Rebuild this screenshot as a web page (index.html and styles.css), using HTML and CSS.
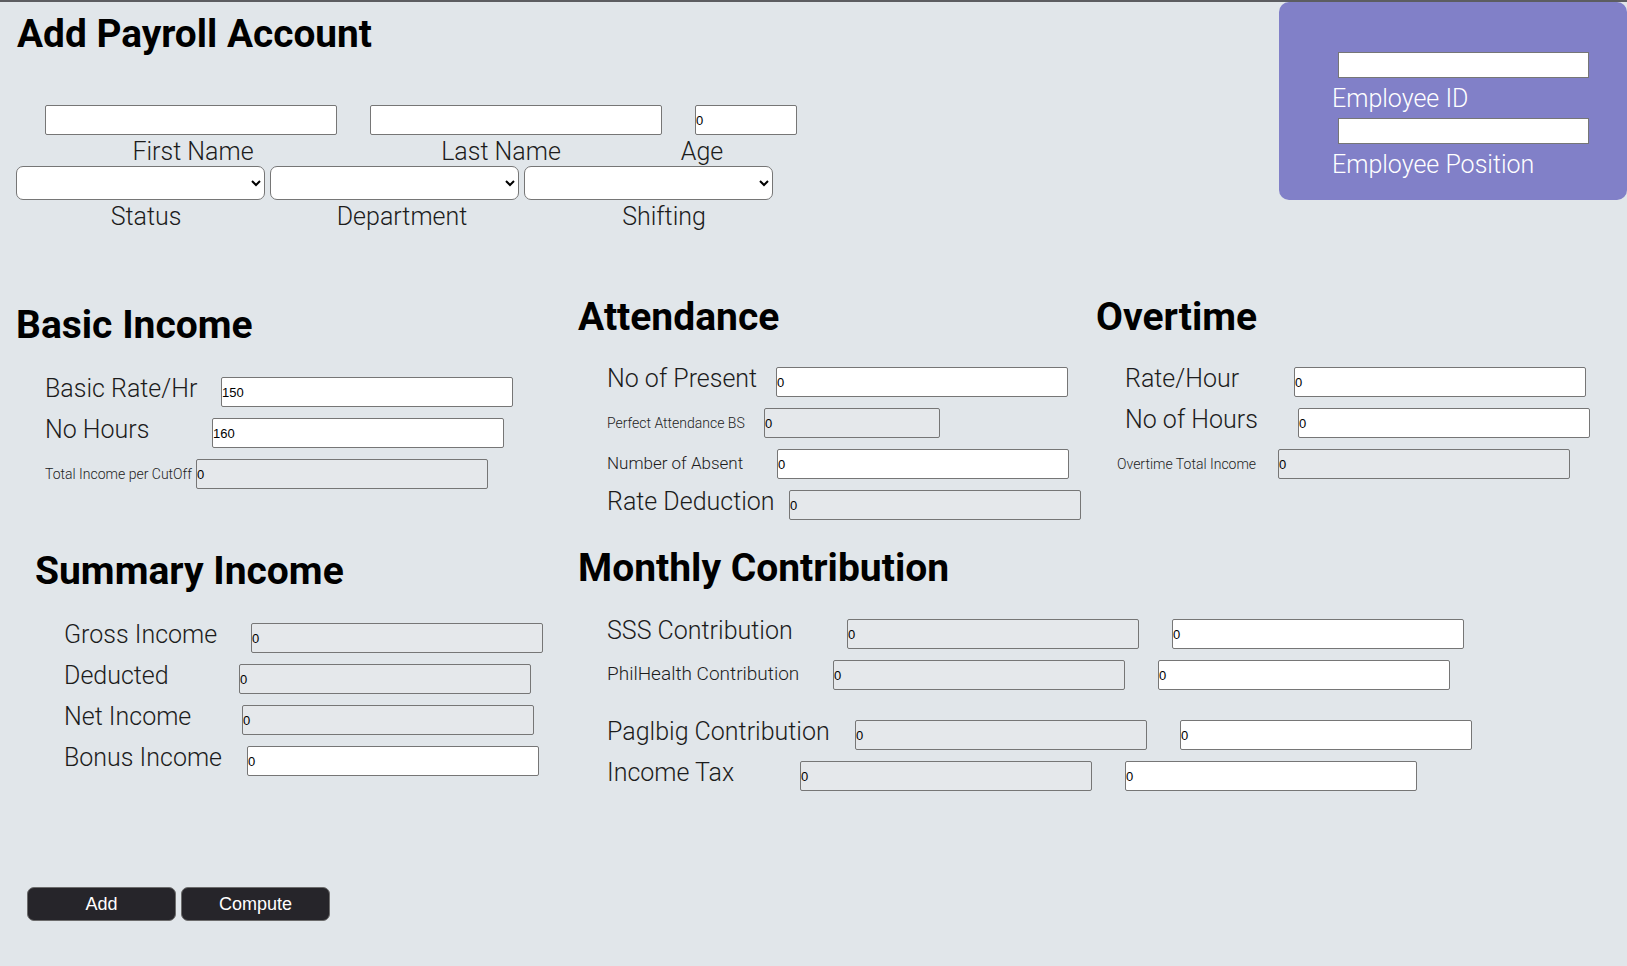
FILE: index.html
```html
<!DOCTYPE html>
<html lang="en">
<head>
<meta charset="utf-8">
<title>Add Payroll Account</title>
<link rel="stylesheet" href="styles.css">
</head>
<body>
<div class="page">
  <header class="top">
    <div class="top-left">
      <h1 class="title">Add Payroll Account</h1>
      <div class="name-inputs">
        <input class="fld fld-name" type="text">
        <input class="fld fld-name" type="text">
        <input class="fld fld-age" type="text" value="0">
      </div>
      <div class="name-labels">
        <span class="cap nl-first">First Name</span>
        <span class="cap nl-last">Last Name</span>
        <span class="cap nl-age">Age</span>
      </div>
      <div class="sel-row">
        <select class="sel"><option></option></select>
        <select class="sel"><option></option></select>
        <select class="sel"><option></option></select>
      </div>
      <div class="sel-labels">
        <span class="cap sl-status">Status</span>
        <span class="cap sl-dept">Department</span>
        <span class="cap sl-shift">Shifting</span>
      </div>
    </div>
    <aside class="emp-panel">
      <input class="emp-input" type="text">
      <div class="emp-label">Employee ID</div>
      <input class="emp-input emp-input-2" type="text">
      <div class="emp-label">Employee Position</div>
    </aside>
  </header>

  <main class="sections">
    <section class="sec basic">
      <h2 class="sec-title sec-title-lo">Basic Income</h2>
      <div class="fields">
        <div class="row"><span class="lab w176">Basic Rate/Hr</span><input class="fld fld-w" type="text" value="150"></div>
        <div class="row"><span class="lab w167">No Hours</span><input class="fld fld-w" type="text" value="160"></div>
        <div class="row"><span class="lab lab-sm w151">Total Income per CutOff</span><input class="fld fld-w fld-ro" type="text" value="0" readonly></div>
      </div>
    </section>

    <section class="sec attendance">
      <h2 class="sec-title">Attendance</h2>
      <div class="fields">
        <div class="row"><span class="lab w169">No of Present</span><input class="fld fld-w" type="text" value="0"></div>
        <div class="row"><span class="lab lab-sm w157">Perfect Attendance BS</span><input class="fld fld-short fld-ro" type="text" value="0" readonly></div>
        <div class="row"><span class="lab lab-md w170">Number of Absent</span><input class="fld fld-w" type="text" value="0"></div>
        <div class="row"><span class="lab w182">Rate Deduction</span><input class="fld fld-w fld-ro" type="text" value="0" readonly></div>
      </div>
    </section>

    <section class="sec overtime">
      <h2 class="sec-title">Overtime</h2>
      <div class="fields">
        <div class="row"><span class="lab w169">Rate/Hour</span><input class="fld fld-w" type="text" value="0"></div>
        <div class="row"><span class="lab w173">No of Hours</span><input class="fld fld-w" type="text" value="0"></div>
        <div class="row"><span class="lab lab-sm lab-out w161">Overtime Total Income</span><input class="fld fld-w fld-ro" type="text" value="0" readonly></div>
      </div>
    </section>

    <section class="sec summary">
      <h2 class="sec-title sec-title-lo">Summary Income</h2>
      <div class="fields">
        <div class="row"><span class="lab w187">Gross Income</span><input class="fld fld-w fld-ro" type="text" value="0" readonly></div>
        <div class="row"><span class="lab w175">Deducted</span><input class="fld fld-w fld-ro" type="text" value="0" readonly></div>
        <div class="row"><span class="lab w178">Net Income</span><input class="fld fld-w fld-ro" type="text" value="0" readonly></div>
        <div class="row"><span class="lab w183">Bonus Income</span><input class="fld fld-w" type="text" value="0"></div>
      </div>
    </section>

    <section class="sec monthly">
      <h2 class="sec-title sec-title-mid">Monthly Contribution</h2>
      <div class="fields">
        <div class="row"><span class="lab w240">SSS Contribution</span><input class="fld fld-w fld-ro pair" type="text" value="0" readonly><input class="fld fld-w" type="text" value="0"></div>
        <div class="row"><span class="lab lab-lg w226">PhilHealth Contribution</span><input class="fld fld-w fld-ro pair" type="text" value="0" readonly><input class="fld fld-w" type="text" value="0"></div>
        <div class="row row-spaced"><span class="lab w248">Paglbig Contribution</span><input class="fld fld-w fld-ro pair" type="text" value="0" readonly><input class="fld fld-w" type="text" value="0"></div>
        <div class="row"><span class="lab w193">Income Tax</span><input class="fld fld-w fld-ro pair" type="text" value="0" readonly><input class="fld fld-w" type="text" value="0"></div>
      </div>
    </section>
  </main>

  <div class="actions">
    <button class="btn" type="button">Add</button>
    <button class="btn" type="button">Compute</button>
  </div>
</div>
</body>
</html>
```

FILE: styles.css
```css
* { box-sizing: border-box; }

html, body { margin: 0; }

body {
  background: #e1e6ea;
  border-top: 2px solid #5c5d61;
  font-family: Roboto, "Liberation Sans", Arial, sans-serif;
  color: #1c1c1c;
}

.page {
  padding-left: 16px;
}

/* ---------- header ---------- */
.top {
  display: flex;
  justify-content: space-between;
  align-items: flex-start;
}

.title {
  margin: 10px 0 0 1px;
  font-size: 38.8px;
  line-height: 44px;
  font-weight: 700;
  color: #000;
}

.name-inputs {
  display: flex;
  gap: 33px;
  margin: 49px 0 0 29px;
}

.fld {
  height: 30px;
  border: 1px solid #767676;
  border-radius: 2px;
  background: #fff;
  padding: 0;
  font: 13px "Liberation Sans", Arial, sans-serif;
  color: #000;
  outline: none;
}

.fld-name { width: 292px; }
.fld-age { width: 102px; }

.cap {
  display: block;
  font-size: 25px;
  font-weight: 300;
  line-height: 28px;
  text-align: center;
  white-space: nowrap;
}

.name-labels {
  display: flex;
  margin: 3px 0 0 29px;
}

.nl-first { width: 296px; }
.nl-last { width: 320px; }
.nl-age { width: 82px; }

.sel-row {
  display: flex;
  gap: 5px;
  margin-top: 0;
}

.sel {
  width: 249px;
  height: 34px;
  border: 1px solid #767676;
  border-radius: 7px;
  background: #fff;
  font: 13px "Liberation Sans", Arial, sans-serif;
}

.sel-labels {
  display: flex;
  margin-top: 3px;
}

.sl-status { width: 260px; }
.sl-dept { width: 252px; }
.sl-shift { width: 272px; }

.emp-panel {
  flex: none;
  width: 348px;
  height: 198px;
  background: #8180c8;
  border-radius: 10px;
  padding: 50px 0 0 53px;
}

.emp-input {
  display: block;
  width: 251px;
  height: 26px;
  margin-left: 6px;
  border: 1px solid #767676;
  background: #fff;
  outline: none;
}

.emp-input-2 { margin-top: 5px; }

.emp-label {
  margin-top: 7px;
  color: #fff;
  font-size: 25px;
  font-weight: 300;
  line-height: 28px;
}

/* ---------- sections ---------- */
.sections {
  display: grid;
  grid-template-columns: 562px 518px 1fr;
  row-gap: 26px;
  margin-top: 64px;
}

.sec-title {
  margin: 0 0 28px;
  font-size: 39px;
  line-height: 44px;
  font-weight: 700;
  color: #000;
}

.sec-title-lo { margin-bottom: 30px; }
.sec-title-mid { margin-bottom: 29px; }

.basic { padding-top: 8px; }
.summary { padding-top: 3px; margin-left: 19px; }
.monthly { grid-column: 2 / span 2; }

.fields {
  display: flex;
  flex-direction: column;
  gap: 11px;
  padding-left: 29px;
}

.row {
  display: flex;
  align-items: baseline;
}

.row-spaced { margin-top: 19px; }

.lab {
  flex: none;
  font-size: 25px;
  font-weight: 300;
  line-height: 20px;
  white-space: nowrap;
  color: #1c1c1c;
}

.lab-sm { font-size: 14px; font-weight: 300; color: #222; }
.lab-md { font-size: 17px; font-weight: 300; }
.lab-lg { font-size: 19px; font-weight: 300; }
.lab-out { margin-left: -8px; }

.w151 { width: 151px; }
.w157 { width: 157px; }
.w161 { width: 161px; }
.w167 { width: 167px; }
.w169 { width: 169px; }
.w170 { width: 170px; }
.w173 { width: 173px; }
.w175 { width: 175px; }
.w176 { width: 176px; }
.w178 { width: 178px; }
.w182 { width: 182px; }
.w183 { width: 183px; }
.w187 { width: 187px; }
.w193 { width: 193px; }
.w226 { width: 226px; }
.w240 { width: 240px; }
.w248 { width: 248px; }

.fld-w { width: 292px; }
.fld-short { width: 176px; }
.fld-ro { background: #e5e8eb; }
.pair { margin-right: 33px; }

/* ---------- actions ---------- */
.actions {
  display: flex;
  gap: 5px;
  margin: 96px 0 0 11px;
}

.btn {
  width: 149px;
  height: 34px;
  background: #26252a;
  color: #fff;
  border: 1px solid #6c6c6c;
  border-radius: 7px;
  font: 18px "Liberation Sans", Arial, sans-serif;
  cursor: pointer;
}
```
